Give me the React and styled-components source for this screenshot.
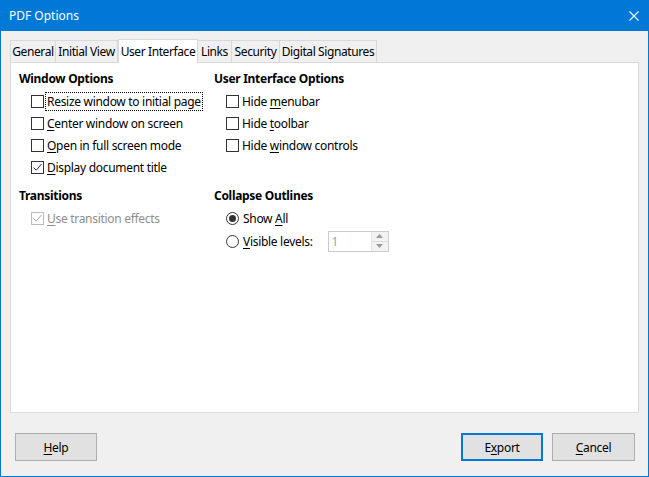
import React from 'react'
import styled, { createGlobalStyle } from 'styled-components'

const GlobalStyle = createGlobalStyle`
	body {
		margin: 0;
		font-family: 'Noto Sans', 'Open Sans', sans-serif;
		font-size: 12px;
		letter-spacing: -0.3px;
		color: #000;
	}
`

const Window = styled.div`
	width: 649px;
	height: 477px;
	box-sizing: border-box;
	border: 1px solid #0078d7;
	border-top: none;
	background: #f0f0f0;
	display: flex;
	flex-direction: column;
`

const TitleBar = styled.div`
	height: 31px;
	background: #0078d7;
	color: #fff;
	display: flex;
	align-items: center;
	justify-content: space-between;
	padding: 0 9px 0 8px;
	font-size: 12px;
	letter-spacing: 0;
`

const Body = styled.div`
	padding: 7px 9px 0 9px;
`

const TabStrip = styled.div`
	display: flex;
	align-items: flex-end;
	height: 24px;
`

const Tab = styled.div`
	box-sizing: border-box;
	width: ${p => p.$w}px;
	height: ${p => (p.$active ? '24px' : '22px')};
	border: 1px solid #d9d9d9;
	border-bottom: none;
	border-left: ${p => (p.$first || p.$active ? '1px solid #d9d9d9' : 'none')};
	background: ${p => (p.$active ? '#fff' : '#f0f0f0')};
	display: flex;
	align-items: center;
	justify-content: center;
	white-space: nowrap;
	letter-spacing: -0.4px;
	line-height: 1;
	position: relative;
	bottom: ${p => (p.$active ? '-1px' : '0')};
	margin-top: ${p => (p.$active ? '-1px' : '0')};
`

const Panel = styled.div`
	box-sizing: border-box;
	height: 351px;
	background: #fff;
	border: 1px solid #d9d9d9;
	padding: 5px 8px;
	display: grid;
	grid-template-columns: 195px 1fr;
	grid-template-rows: auto auto;
	row-gap: 7px;
	align-content: start;
`

const Section = styled.div`
	display: flex;
	flex-direction: column;
`

const Heading = styled.div`
	height: 22px;
	line-height: 22px;
	font-weight: 700;
`

const Row = styled.label`
	display: flex;
	align-items: center;
	height: ${p => p.$tall ? '24px' : '22px'};
	padding-left: 12px;
	color: ${p => (p.$disabled ? '#8d8d8d' : '#000')};
`

const Box = styled.span`
	box-sizing: border-box;
	width: 13px;
	height: 13px;
	border: 1px solid ${p => (p.$disabled ? '#bcbcbc' : '#333')};
	background: #fff;
	margin-right: 2px;
	display: flex;
	align-items: center;
	justify-content: center;
	flex: none;
`

const Round = styled(Box)`
	border-radius: 50%;
	margin-right: 3px;
`

const Dot = styled.span`
	width: 7px;
	height: 7px;
	border-radius: 50%;
	background: #333;
`

const Text = styled.span`
	padding: 1px 1px;
	outline: ${p => (p.$focus ? '1px dotted #000' : 'none')};
	line-height: 15px;
	white-space: nowrap;
`

const U = styled.span`
	text-decoration: underline;
	text-underline-offset: 2px;
`

const Spin = styled.div`
	box-sizing: border-box;
	width: 61px;
	height: 21px;
	margin-left: ${p => p.$offset}px;
	border: 1px solid #cccccc;
	background: #fff;
	display: flex;
	align-items: center;
	justify-content: space-between;
	color: #a0a0a0;
	padding-left: 3px;
`

const SpinButtons = styled.div`
	width: 16px;
	height: 100%;
	display: flex;
	flex-direction: column;
	border-left: 1px solid #e6e6e6;
`

const SpinHalf = styled.div`
	flex: 1;
	display: flex;
	align-items: center;
	justify-content: center;
	background: #f3f3f3;
	& + & {
		border-top: 1px solid #e0e0e0;
	}
`

const Footer = styled.div`
	display: flex;
	justify-content: space-between;
	padding: 20px 13px 0 14px;
`

const ButtonGroup = styled.div`
	display: flex;
	gap: 9px;
`

const Button = styled.div`
	box-sizing: border-box;
	width: ${p => p.$w || 82}px;
	height: 28px;
	background: #e1e1e1;
	border: ${p => (p.$default ? '2px solid #0078d7' : '1px solid #adadad')};
	display: flex;
	align-items: center;
	justify-content: center;
`

const Check = ({ color }) => (
	<svg width="11" height="11" viewBox="0 0 11 11">
		<path d="M1.5 5.5 L4.2 8.2 L9.5 2" fill="none" stroke={color} strokeWidth="1" />
	</svg>
)

const Checkbox = ({ checked, disabled, focus, children }) => (
	<Row $disabled={disabled}>
		<Box $disabled={disabled}>{checked && <Check color={disabled ? '#a9a9a9' : '#333'} />}</Box>
		<Text $focus={focus}>{children}</Text>
	</Row>
)

const Radio = ({ checked, tall, children, after }) => (
	<Row $tall={tall}>
		<Round>{checked && <Dot />}</Round>
		<Text>{children}</Text>
		{after}
	</Row>
)

const tabs = [
	{ label: 'General', w: 46 },
	{ label: 'Initial View', w: 62 },
	{ label: 'User Interface', w: 80 },
	{ label: 'Links', w: 34 },
	{ label: 'Security', w: 48 },
	{ label: 'Digital Signatures', w: 97 },
]

export default function App() {
	return (
		<>
			<GlobalStyle />
			<Window>
				<TitleBar>
					<span>PDF Options</span>
					<svg width="10" height="10" viewBox="0 0 10 10">
						<path d="M0.5 0.5 L9.5 9.5 M9.5 0.5 L0.5 9.5" stroke="#fff" strokeWidth="1.1" />
					</svg>
				</TitleBar>
				<Body>
					<TabStrip>
						{tabs.map((t, i) => (
							<Tab key={t.label} $w={t.w} $first={i === 0} $active={t.label === 'User Interface'}>{t.label}</Tab>
						))}
					</TabStrip>
					<Panel>
						<Section>
							<Heading>Window Options</Heading>
							<Checkbox focus>Resize window to initial page</Checkbox>
							<Checkbox><U>C</U>enter window on screen</Checkbox>
							<Checkbox><U>O</U>pen in full screen mode</Checkbox>
							<Checkbox checked><U>D</U>isplay document title</Checkbox>
						</Section>
						<Section>
							<Heading>User Interface Options</Heading>
							<Checkbox>Hide <U>m</U>enubar</Checkbox>
							<Checkbox>Hide <U>t</U>oolbar</Checkbox>
							<Checkbox>Hide <U>w</U>indow controls</Checkbox>
						</Section>
						<Section>
							<Heading>Transitions</Heading>
							<Checkbox checked disabled><U>U</U>se transition effects</Checkbox>
						</Section>
						<Section>
							<Heading>Collapse Outlines</Heading>
							<Radio checked>Show <U>A</U>ll</Radio>
							<Radio tall after={
								<Spin $offset={14}>
									<span>1</span>
									<SpinButtons>
										<SpinHalf>
											<svg width="7" height="4" viewBox="0 0 7 4"><path d="M0 4 L3.5 0 L7 4 Z" fill="#9a9a9a" /></svg>
										</SpinHalf>
										<SpinHalf>
											<svg width="7" height="4" viewBox="0 0 7 4"><path d="M0 0 L3.5 4 L7 0 Z" fill="#9a9a9a" /></svg>
										</SpinHalf>
									</SpinButtons>
								</Spin>
							}><U>V</U>isible levels:</Radio>
						</Section>
					</Panel>
				</Body>
				<Footer>
					<Button><span><U>H</U>elp</span></Button>
					<ButtonGroup>
						<Button $default><span>E<U>x</U>port</span></Button>
						<Button $w={83}><span><U>C</U>ancel</span></Button>
					</ButtonGroup>
				</Footer>
			</Window>
		</>
	)
}
